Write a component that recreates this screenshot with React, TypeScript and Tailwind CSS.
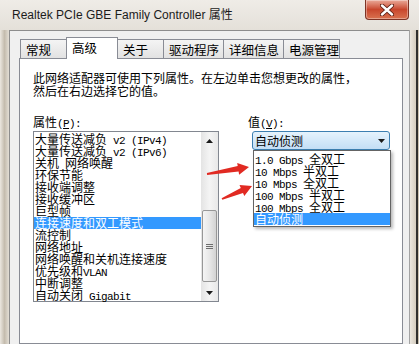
const LATIN = /^[\x20-\x7e]+$/;

// SimSun-style text: CJK at 12px, latin runs as 6px-wide monospace
function Txt({ text }: { text: string }) {
  const parts = text.split(/([\x20-\x7e]+)/).filter(Boolean);
  return (
    <>
      {parts.map((p, i) =>
        LATIN.test(p) ? (
          <span key={i} className="font-['Liberation_Mono',monospace] text-[11px] tracking-[-0.6px]">
            {p}
          </span>
        ) : (
          <span key={i}>{p}</span>
        ),
      )}
    </>
  );
}

const tabs = [
  { label: "常规", w: "w-[47px]" },
  { label: "高级", w: "w-[52px]", active: true },
  { label: "关于", w: "w-[47px]" },
  { label: "驱动程序", w: "w-[61px]" },
  { label: "详细信息", w: "w-[61px]" },
  { label: "电源管理", w: "w-[57px]" },
];

const properties = [
  "大量传送减负 v2 (IPv4)",
  "大量传送减负 v2 (IPv6)",
  "关机 网络唤醒",
  "环保节能",
  "接收端调整",
  "接收缓冲区",
  "巨型帧",
  "连接速度和双工模式",
  "流控制",
  "网络地址",
  "网络唤醒和关机连接速度",
  "优先级和VLAN",
  "中断调整",
  "自动关闭 Gigabit",
];

const values = [
  "1.0 Gbps 全双工",
  "10 Mbps 半双工",
  "10 Mbps 全双工",
  "100 Mbps 半双工",
  "100 Mbps 全双工",
  "自动侦测",
];

function arrowPoints(x1: number, y1: number, x2: number, y2: number) {
  const dx = x2 - x1;
  const dy = y2 - y1;
  const len = Math.hypot(dx, dy);
  const ux = dx / len;
  const uy = dy / len;
  const nx = -uy;
  const ny = ux;
  const head = 11;
  const hw = 6;
  const tw = 0.9;
  const sw = 2.7;
  const bx = x2 - ux * head;
  const by = y2 - uy * head;
  const pts = [
    [x1 + nx * tw, y1 + ny * tw],
    [bx + nx * sw, by + ny * sw],
    [bx + nx * hw, by + ny * hw],
    [x2, y2],
    [bx - nx * hw, by - ny * hw],
    [bx - nx * sw, by - ny * sw],
    [x1 - nx * tw, y1 - ny * tw],
  ];
  return pts.map((p) => p.map((v) => v.toFixed(1)).join(",")).join(" ");
}

function Tri({ up }: { up?: boolean }) {
  return (
    <svg width="7" height="4" viewBox="0 0 7 4">
      <path d={up ? "M0 4 L3.5 0 L7 4 Z" : "M0 0 L3.5 4 L7 0 Z"} fill="#1a1a1a" />
    </svg>
  );
}

function CloseButton() {
  return (
    <div className="ml-auto mr-[10px] flex h-[20px] w-[44px] items-center justify-center rounded-b-[4px] border border-t-0 border-[#7d3325] bg-gradient-to-b from-[#e9a999] via-[#c8462d] to-[#d9714f] shadow-[inset_0_0_0_1px_rgba(255,255,255,0.35)]">
      <svg width="14" height="12" viewBox="0 0 14 12">
        <path d="M2 1.5 L12 10.5 M12 1.5 L2 10.5" stroke="#5b1d12" strokeWidth="4.2" strokeLinecap="round" />
        <path d="M2 1.5 L12 10.5 M12 1.5 L2 10.5" stroke="#ffffff" strokeWidth="2.4" strokeLinecap="round" />
      </svg>
    </div>
  );
}

export default function App() {
  return (
    <div className="relative flex h-[344px] w-[419px] flex-col overflow-hidden bg-[#e6e2db] font-['Noto_Sans_CJK_SC','Noto_Sans',sans-serif] text-[12px] text-black">
      <div className="flex h-[30px] shrink-0 bg-gradient-to-b from-[#efece7] to-[#e4e0d9]">
        <div className="pl-[12px] pt-[7px] font-['Liberation_Sans','Noto_Sans_CJK_SC',sans-serif] text-[12px] leading-[16px] text-[#1b1b1b]">
          Realtek PCIe GBE Family Controller 属性
        </div>
        <CloseButton />
      </div>

      <div className="flex min-h-0 flex-1">
        <div className="w-[9px] shrink-0 bg-gradient-to-r from-[#ebe7e0] via-[#c4bcae] to-[#e3ded5]" />

        <div className="flex min-w-0 flex-1 flex-col border-l border-t border-[#8d8d8d] bg-[#f0f0f0] pl-[9px] pr-[6px] pt-[6px]">
          <div className="flex h-[21px] shrink-0 items-end pl-[1px]">
            {tabs.map((t, i) =>
              t.active ? (
                <div
                  key={t.label}
                  className={`relative z-10 -mb-px h-[22px] ${t.w} -ml-px border border-b-0 border-[#898c95] bg-white pl-[5px] text-[12.5px] leading-[20px]`}
                >
                  {t.label}
                </div>
              ) : (
                <div
                  key={t.label}
                  className={`h-[19px] ${t.w} ${i > 0 ? "-ml-px" : ""} overflow-hidden border border-b-0 border-[#898c95] bg-gradient-to-b from-[#f4f4f4] to-[#e2e2e2] pl-[5px] text-[12.5px] leading-[20px]`}
                >
                  {t.label}
                </div>
              ),
            )}
          </div>

          <div className="flex-1 border border-[#898c95] bg-white pl-[13px] pt-[12px]">
            <div className="leading-[13px]">
              此网络适配器可使用下列属性。在左边单击您想更改的属性，
              <br />
              然后在右边选择它的值。
            </div>

            <div className="mt-[18px] flex">
              <div className="w-[186px] shrink-0">
                <div className="h-[13px] leading-[13px]">
                  属性
                  <span className="font-['Liberation_Mono',monospace] text-[11px] tracking-[-0.6px]">
                    (<span className="underline">P</span>):
                  </span>
                </div>
                <div className="mt-[3px] flex h-[171px] border border-[#828790] bg-white">
                  <div className="flex-1 pt-[1px]">
                    {properties.map((p) => (
                      <div
                        key={p}
                        className={`h-[12px] whitespace-pre pl-[1px] leading-[12px] ${
                          p === "连接速度和双工模式" ? "bg-[#3399ff] text-white" : ""
                        }`}
                      >
                        <Txt text={p} />
                      </div>
                    ))}
                  </div>
                  <div className="flex w-[17px] shrink-0 flex-col bg-gradient-to-r from-[#e4e4e4] via-[#f4f4f4] to-[#e8e8e8]">
                    <div className="flex h-[17px] items-center justify-center">
                      <Tri up />
                    </div>
                    <div className="flex-1">
                      <div className="mx-[1px] mt-[61px] flex h-[72px] items-center justify-center rounded-[2px] border border-[#979797] bg-gradient-to-r from-[#f5f5f5] via-[#e7e7e7] to-[#d3d3d3]">
                        <div className="flex flex-col gap-[1px]">
                          <div className="h-px w-[7px] bg-[#6d6d6d]" />
                          <div className="h-px w-[7px] bg-[#6d6d6d]" />
                          <div className="h-px w-[7px] bg-[#6d6d6d]" />
                        </div>
                      </div>
                    </div>
                    <div className="flex h-[17px] items-center justify-center">
                      <Tri />
                    </div>
                  </div>
                </div>
              </div>

              <div className="ml-[29px] w-[143px] shrink-0">
                <div className="h-[13px] leading-[13px]">
                  值
                  <span className="font-['Liberation_Mono',monospace] text-[11px] tracking-[-0.6px]">
                    (<span className="underline">V</span>):
                  </span>
                </div>
                <div className="relative ml-[4px] mt-[3px] w-[138px]">
                  <div className="flex h-[19px] items-center rounded-[3px] border border-[#3c7fb1] bg-gradient-to-b from-[#e5f3fd] to-[#c3def5] pl-[2px] pr-[4px] leading-[12px]">
                    <span className="flex-1">自动侦测</span>
                    <Tri />
                  </div>
                  <div className="absolute left-[1px] top-[19px] z-10 w-[138px] border border-[#646464] bg-white pb-[1px] pt-[2px] shadow-[2px_2px_3px_rgba(0,0,0,0.28)]">
                    {values.map((v) => (
                      <div
                        key={v}
                        className={`h-[12px] whitespace-pre pl-[1px] leading-[12px] ${
                          v === "自动侦测" ? "bg-[#3399ff] text-white" : ""
                        }`}
                      >
                        <Txt text={v} />
                      </div>
                    ))}
                  </div>
                </div>
              </div>
            </div>
          </div>
        </div>

        <div className="flex w-[10px] shrink-0 justify-end border-l border-[#a3a3a3] bg-gradient-to-r from-[#ebe7e0] to-[#c9bfae]">
          <div className="mr-[1px] w-[2px] bg-[#2f2f2f]" />
        </div>
      </div>

      <svg className="pointer-events-none absolute left-0 top-0" width="419" height="344" viewBox="0 0 419 344">
        <polygon points={arrowPoints(207, 174, 249, 167)} fill="#e12a22" />
        <polygon points={arrowPoints(222, 199, 252, 186)} fill="#e12a22" />
      </svg>
    </div>
  );
}
